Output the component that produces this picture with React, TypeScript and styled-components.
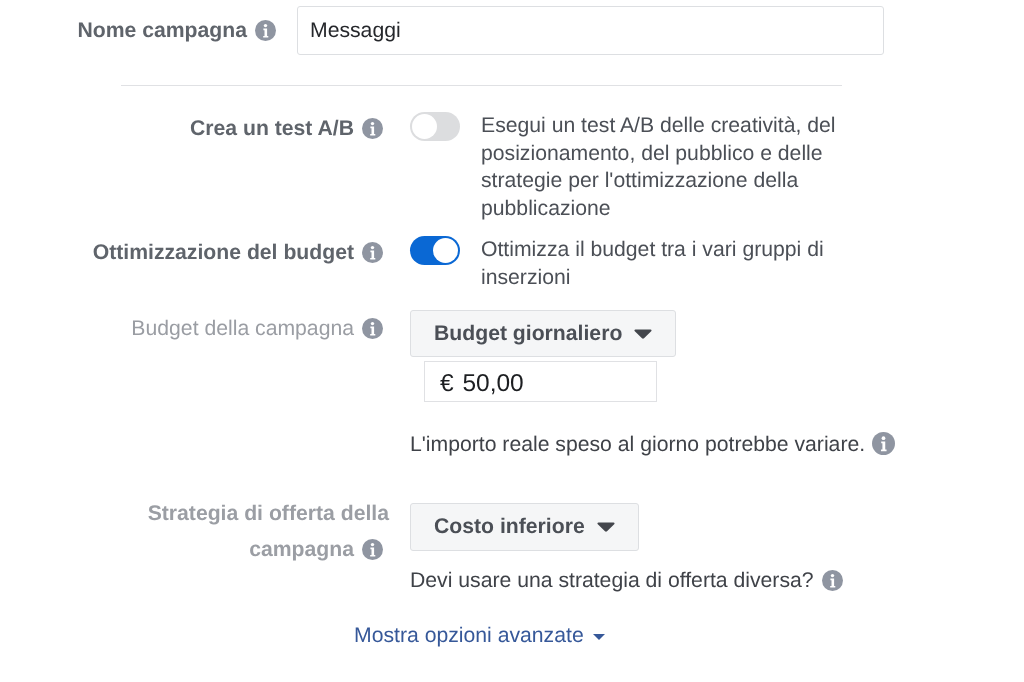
import React from "react";
import styled, { createGlobalStyle } from "styled-components";

const Global = createGlobalStyle`
  html, body { margin: 0; padding: 0; background: #fff; }
  body {
    font-family: "Liberation Sans", Arial, sans-serif;
    text-rendering: geometricPrecision;
  }
`;

const Page = styled.main`
  width: 1024px;
  height: 682px;
  overflow: hidden;
  box-sizing: border-box;
  padding-top: 6px;
  background: #fff;
  filter: blur(0.4px);
`;

const Row = styled.section<{ $label: number; $gap: number; $top?: number }>`
  display: grid;
  grid-template-columns: ${(p) => p.$label}px 1fr;
  column-gap: ${(p) => p.$gap}px;
  margin-top: ${(p) => p.$top ?? 0}px;
`;

const Label = styled.div<{ $tone: "strong" | "soft" | "softBold"; $lh?: number; $pt?: number }>`
  display: block;
  text-align: right;
  white-space: nowrap;
  font-size: 21.2px;
  line-height: ${(p) => p.$lh ?? 28}px;
  padding-top: ${(p) => p.$pt ?? 0}px;
  font-weight: ${(p) => (p.$tone === "soft" ? 400 : 700)};
  color: ${(p) => (p.$tone === "strong" ? "#5f646b" : p.$tone === "soft" ? "#9a9da3" : "#9b9ea4")};
`;

const InfoSvg = styled.svg<{ $size: number; $ml: number; $mr: number }>`
  width: ${(p) => p.$size}px;
  height: ${(p) => p.$size}px;
  vertical-align: -4px;
  margin-left: ${(p) => p.$ml}px;
  margin-right: ${(p) => p.$mr}px;
`;

const Info = ({ ml = 8, mr = 0, size = 21 }: { ml?: number; mr?: number; size?: number }) => (
  <InfoSvg $size={size} $ml={ml} $mr={mr} viewBox="0 0 21 21" aria-hidden="true">
    <circle cx="10.5" cy="10.5" r="10.5" fill="#8f95a1" />
    <circle cx="10.5" cy="5.6" r="1.7" fill="#fff" />
    <path d="M8.4 8.6h3.7v7.3h1.2v1.6H8.2v-1.6h1.3v-5.7H8.4z" fill="#fff" />
  </InfoSvg>
);

const NameInput = styled.div`
  box-sizing: border-box;
  width: 587px;
  height: 49px;
  border: 1px solid #dddfe2;
  border-radius: 3px;
  padding: 0 12px;
  display: flex;
  align-items: center;
  font-size: 21.2px;
  color: #25272b;
`;

const Divider = styled.hr`
  border: 0;
  height: 1px;
  background: #e0e1e4;
  width: 721px;
  margin: 30px 0 0 121px;
`;

const Desc = styled.p`
  margin: 0;
  padding-top: 1px;
  font-size: 21.2px;
  line-height: 27.7px;
  color: #4b4f56;
  width: 370px;
`;

const ToggleCell = styled.div`
  display: flex;
  column-gap: 21px;
  align-items: flex-start;
`;

const ToggleTrack = styled.div<{ $on?: boolean }>`
  flex: none;
  box-sizing: border-box;
  width: 50px;
  height: 29px;
  margin-top: 1px;
  border-radius: 15px;
  padding: 2px;
  display: flex;
  justify-content: ${(p) => (p.$on ? "flex-end" : "flex-start")};
  background: ${(p) => (p.$on ? "#0a68d4" : "#dcdddf")};
`;

const ToggleKnob = styled.div`
  width: 25px;
  height: 25px;
  border-radius: 50%;
  background: #fff;
`;

const Control = styled.div<{ $pt?: number }>`
  display: flex;
  flex-direction: column;
  align-items: flex-start;
  padding-top: ${(p) => p.$pt ?? 0}px;
`;

const Select = styled.div<{ $w: number; $h: number }>`
  box-sizing: border-box;
  width: ${(p) => p.$w}px;
  height: ${(p) => p.$h}px;
  display: flex;
  align-items: center;
  padding-left: 23px;
  column-gap: 12px;
  background: #f5f6f7;
  border: 1px solid #dddfe2;
  border-radius: 3px;
  font-size: 21.2px;
  font-weight: 700;
  color: #4b4f56;
  white-space: nowrap;
`;

const CaretSvg = styled.svg`
  flex: none;
  width: 18px;
  height: 10px;
`;

const Caret = () => (
  <CaretSvg viewBox="0 0 18 10" aria-hidden="true">
    <path d="M1.5 0.5h15c1 0 1.4 1 .7 1.8L10 9.3c-.6.6-1.4.6-2 0L.8 2.3C.1 1.5.5.5 1.5.5z" fill="#43464c" />
  </CaretSvg>
);

const Amount = styled.div`
  box-sizing: border-box;
  width: 233px;
  height: 41px;
  margin: 4px 0 0 14px;
  padding: 4px 0 0 15px;
  display: flex;
  align-items: center;
  border: 1px solid #e0e1e4;
  font-size: 24.5px;
  word-spacing: 2px;
  color: #1c1e21;
`;

const Note = styled.p<{ $top: number }>`
  margin: ${(p) => p.$top}px 0 0;
  font-size: 21.2px;
  line-height: 28px;
  color: #3f4248;
  white-space: nowrap;
`;

const More = styled.a`
  display: flex;
  align-items: center;
  column-gap: 9px;
  width: max-content;
  margin: 27px 0 0 354px;
  font-size: 21.2px;
  line-height: 28px;
  color: #365899;
`;

const MoreCaret = styled.i`
  width: 0;
  height: 0;
  margin-top: 1px;
  border-left: 6px solid transparent;
  border-right: 6px solid transparent;
  border-top: 6px solid #365899;
`;

export default function App() {
  return (
    <Page>
      <Global />
      <Row $label={276} $gap={21}>
        <Label $tone="strong" $lh={49}>Nome campagna<Info /></Label>
        <NameInput>Messaggi</NameInput>
      </Row>
      <Divider />
      <Row $label={383} $gap={27} $top={25}>
        <Label $tone="strong" $pt={4}>Crea un test A/B<Info /></Label>
        <ToggleCell>
          <ToggleTrack><ToggleKnob /></ToggleTrack>
          <Desc>Esegui un test A/B delle creatività, del posizionamento, del pubblico e delle strategie per l'ottimizzazione della pubblicazione</Desc>
        </ToggleCell>
      </Row>
      <Row $label={383} $gap={27} $top={12}>
        <Label $tone="strong" $pt={4}>Ottimizzazione del budget<Info /></Label>
        <ToggleCell>
          <ToggleTrack $on><ToggleKnob /></ToggleTrack>
          <Desc>Ottimizza il budget tra i vari gruppi di inserzioni</Desc>
        </ToggleCell>
      </Row>
      <Row $label={383} $gap={27} $top={19}>
        <Label $tone="soft" $pt={5}>Budget della campagna<Info /></Label>
        <Control>
          <Select $w={266} $h={47}>Budget giornaliero<Caret /></Select>
          <Amount>€ 50,00</Amount>
          <Note $top={29}>L'importo reale speso al giorno potrebbe variare.<Info size={23} ml={7} /></Note>
        </Control>
      </Row>
      <Row $label={389} $gap={21} $top={36}>
        <Label $tone="softBold" $lh={36} $pt={1}>Strategia di offerta della<br />campagna<Info mr={6} /></Label>
        <Control $pt={8}>
          <Select $w={229} $h={48}>Costo inferiore<Caret /></Select>
          <Note $top={16}>Devi usare una strategia di offerta diversa?<Info /></Note>
        </Control>
      </Row>
      <More>Mostra opzioni avanzate<MoreCaret /></More>
    </Page>
  );
}
